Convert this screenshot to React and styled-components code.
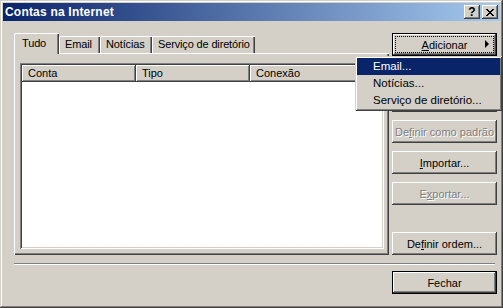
import React from "react";
import styled, { createGlobalStyle, css } from "styled-components";

const FACE = "#d4d0c8";
const SHADOW = "#808080";
const DARK = "#404040";
const NAVY = "#0a246a";

const GlobalStyle = createGlobalStyle`
  html, body {
    margin: 0;
    padding: 0;
    background: ${FACE};
  }
  body {
    font-family: "Liberation Sans", Arial, sans-serif;
    font-size: 11px;
    color: #000;
  }
`;

const raised = css`
  box-shadow: inset -1px -1px ${DARK}, inset 1px 1px #fff,
    inset -2px -2px ${SHADOW}, inset 2px 2px ${FACE};
`;

const Window = styled.div`
  position: relative;
  width: 503px;
  height: 308px;
  box-sizing: border-box;
  padding: 3px;
  background: ${FACE};
  display: flex;
  flex-direction: column;
  overflow: hidden;
  box-shadow: inset -1px -1px ${DARK}, inset 1px 1px ${FACE},
    inset -2px -2px ${SHADOW}, inset 2px 2px #fff;
`;

const TitleBar = styled.div`
  height: 18px;
  display: flex;
  align-items: center;
  padding: 0 2px 0 2px;
  background: linear-gradient(to right, ${NAVY}, #a6caf0);
`;

const Title = styled.span`
  flex: 1;
  color: #fff;
  font-weight: bold;
  font-size: 12px;
  letter-spacing: 0.2px;
`;

const CaptionButton = styled.div`
  width: 16px;
  height: 14px;
  margin-left: ${(p) => p.$gap || 0}px;
  background: ${FACE};
  ${raised};
  display: flex;
  align-items: center;
  justify-content: center;
  font-weight: bold;
  font-size: 12px;
  line-height: 14px;
`;

const Body = styled.div`
  flex: 1;
  display: flex;
  flex-direction: column;
  padding: 12px 3px 0 11px;
`;

const MainRow = styled.div`
  display: flex;
  gap: 3px;
`;

const LeftCol = styled.div`
  width: 375px;
  display: flex;
  flex-direction: column;
`;

const TabRow = styled.div`
  height: 20px;
  display: flex;
  align-items: flex-end;
  position: relative;
  z-index: 1;
`;

const Tab = styled.div`
  width: ${(p) => p.$w}px;
  box-sizing: border-box;
  height: ${(p) => (p.$active ? 21 : 17)}px;
  margin-bottom: ${(p) => (p.$active ? -1 : 0)}px;
  padding: ${(p) => (p.$active ? "4px 0 0 8px" : "2px 0 0 6px")};
  background: ${FACE};
  border-top-left-radius: 2px;
  box-shadow: inset 1px 0 #fff, inset 0 1px #fff, inset -1px 0 ${DARK},
    inset -2px 0 ${SHADOW};
  white-space: nowrap;
  overflow: hidden;
  letter-spacing: -0.15px;
`;

const Panel = styled.div`
  height: 202px;
  box-sizing: border-box;
  padding: 10px 5px 6px 6px;
  display: flex;
  box-shadow: inset 1px 1px #fff, inset -1px -1px ${DARK},
    inset -2px -2px ${SHADOW};
`;

const ListView = styled.div`
  flex: 1;
  background: #fff;
  padding: 2px;
  box-shadow: inset 1px 1px ${SHADOW}, inset -1px -1px #fff,
    inset 2px 2px ${DARK}, inset -2px -2px ${FACE};
`;

const HeaderRow = styled.div`
  display: flex;
  height: 17px;
`;

const HeaderCell = styled.div`
  width: ${(p) => (p.$w ? `${p.$w}px` : "auto")};
  flex: ${(p) => (p.$w ? "none" : 1)};
  box-sizing: border-box;
  padding-left: 6px;
  line-height: 17px;
  background: ${FACE};
  box-shadow: inset -1px -1px ${DARK}, inset 1px 1px #fff,
    inset -2px -2px ${SHADOW};
`;

const RightCol = styled.div`
  width: 105px;
  display: flex;
  flex-direction: column;
`;

const Button = styled.div`
  position: relative;
  height: 23px;
  margin-top: ${(p) => p.$top || 0}px;
  box-sizing: border-box;
  display: flex;
  align-items: center;
  justify-content: center;
  background: ${FACE};
  white-space: nowrap;
  ${(p) =>
    p.$default
      ? css`
          box-shadow: inset 0 0 0 1px #000, inset -2px -2px ${DARK},
            inset 2px 2px #fff, inset -3px -3px ${SHADOW};
        `
      : raised};
  ${(p) =>
    p.$disabled &&
    css`
      color: ${SHADOW};
      text-shadow: 1px 1px #fff;
    `}
`;

const FocusRing = styled.div`
  position: absolute;
  inset: 3px;
  border: 1px dotted #000;
  pointer-events: none;
`;

const Arrow = styled.span`
  position: absolute;
  right: 8px;
  top: 7px;
  width: 0;
  height: 0;
  border-top: 4px solid transparent;
  border-bottom: 4px solid transparent;
  border-left: 4px solid #000;
`;

const Key = styled.span`
  text-decoration: underline;
  text-underline-offset: 1px;
`;

const Separator = styled.div`
  margin-top: 8px;
  margin-right: 2px;
  height: 0;
  border-top: 1px solid ${SHADOW};
  border-bottom: 1px solid #fff;
`;

const Footer = styled.div`
  display: flex;
  justify-content: flex-end;
  margin-top: 6px;
`;

const FooterButton = styled(Button)`
  width: 105px;
`;

const Menu = styled.div`
  position: absolute;
  left: 355px;
  top: 56px;
  width: 147px;
  box-sizing: border-box;
  padding: 2px;
  background: ${FACE};
  box-shadow: inset 1px 1px ${FACE}, inset -1px -1px ${DARK},
    inset 2px 2px #fff, inset -2px -2px ${SHADOW};
  z-index: 5;
`;

const MenuItem = styled.div`
  height: 17px;
  line-height: 17px;
  padding-left: 16px;
  font-size: 11.5px;
  white-space: nowrap;
  background: ${(p) => (p.$hot ? NAVY : "transparent")};
  color: ${(p) => (p.$hot ? "#fff" : "#000")};
`;

function CloseGlyph() {
  return (
    <svg width="8" height="7" viewBox="0 0 8 7">
      <path d="M0 0L7 7M1 0L8 7M7 0L0 7M8 0L1 7" stroke="#000" strokeWidth="1" />
    </svg>
  );
}

export default function App() {
  return (
    <>
      <GlobalStyle />
      <Window>
        <TitleBar>
          <Title>Contas na Internet</Title>
          <CaptionButton>?</CaptionButton>
          <CaptionButton $gap={2}>
            <CloseGlyph />
          </CaptionButton>
        </TitleBar>
        <Body>
          <MainRow>
            <LeftCol>
              <TabRow>
                <Tab $active $w={45}>Tudo</Tab>
                <Tab $w={41}>Email</Tab>
                <Tab $w={52}>Notícias</Tab>
                <Tab $w={103}>Serviço de diretório</Tab>
              </TabRow>
              <Panel>
                <ListView>
                  <HeaderRow>
                    <HeaderCell $w={114}>Conta</HeaderCell>
                    <HeaderCell $w={114}>Tipo</HeaderCell>
                    <HeaderCell>Conexão</HeaderCell>
                  </HeaderRow>
                </ListView>
              </Panel>
            </LeftCol>
            <RightCol>
              <Button $default>
                <FocusRing />
                <span>
                  <Key>A</Key>dicionar
                </span>
                <Arrow />
              </Button>
              {/* covered by the open menu */}
              <Button $top={2} />
              <Button $top={8} />
              <Button $top={8} $disabled>
                De<Key>f</Key>inir como padrão
              </Button>
              <Button $top={8}>
                <Key>I</Key>mportar...
              </Button>
              <Button $top={8} $disabled>
                E<Key>x</Key>portar...
              </Button>
              <Button $top={27}>
                De<Key>f</Key>inir ordem...
              </Button>
            </RightCol>
          </MainRow>
          <Separator />
          <Footer>
            <FooterButton $default>Fechar</FooterButton>
          </Footer>
        </Body>
        <Menu>
          <MenuItem $hot>Email...</MenuItem>
          <MenuItem>Notícias...</MenuItem>
          <MenuItem>Serviço de diretório...</MenuItem>
        </Menu>
      </Window>
    </>
  );
}
